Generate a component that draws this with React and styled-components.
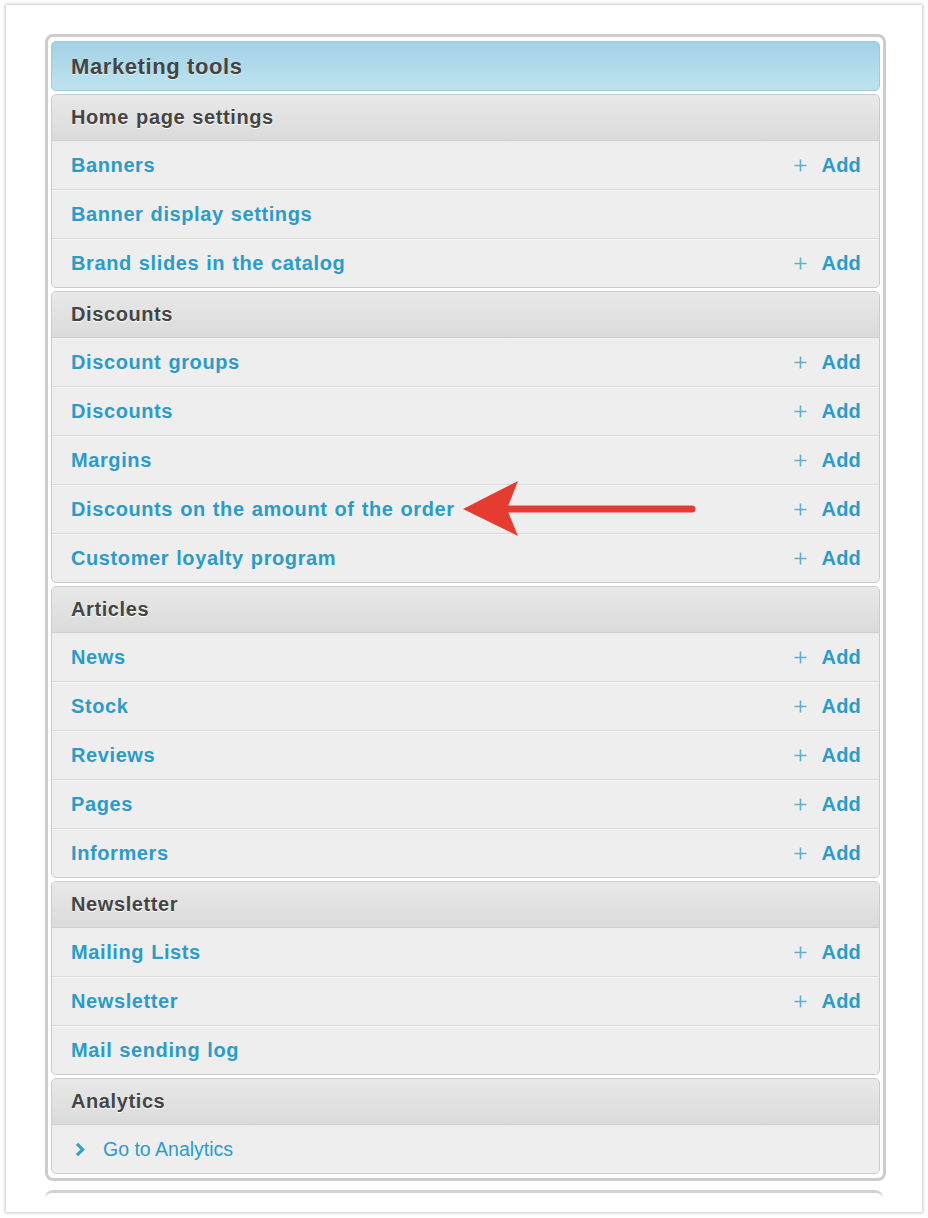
import React from "react";
import styled, { createGlobalStyle } from "styled-components";

const GlobalStyle = createGlobalStyle`
  html, body {
    margin: 0;
    padding: 0;
    background: #fff;
  }
  body {
    font-family: "Liberation Sans", Arial, Helvetica, sans-serif;
  }
`;

const LINK = "#2c9cc7";

const sections = [
  {
    title: "Home page settings",
    items: [
      { label: "Banners", add: true },
      { label: "Banner display settings" },
      { label: "Brand slides in the catalog", add: true },
    ],
  },
  {
    title: "Discounts",
    items: [
      { label: "Discount groups", add: true },
      { label: "Discounts", add: true },
      { label: "Margins", add: true },
      { label: "Discounts on the amount of the order", add: true, arrow: true },
      { label: "Customer loyalty program", add: true },
    ],
  },
  {
    title: "Articles",
    items: [
      { label: "News", add: true },
      { label: "Stock", add: true },
      { label: "Reviews", add: true },
      { label: "Pages", add: true },
      { label: "Informers", add: true },
    ],
  },
  {
    title: "Newsletter",
    items: [
      { label: "Mailing Lists", add: true },
      { label: "Newsletter", add: true },
      { label: "Mail sending log" },
    ],
  },
];

const Frame = styled.div`
  position: relative;
  box-sizing: border-box;
  width: 916px;
  height: 1207px;
  margin: 5px 6px;
  padding: 29px 36px 0 39px;
  background: #fff;
  box-shadow: 0 0 3px 1px rgba(0, 0, 0, 0.22);
  overflow: hidden;
`;

const Box = styled.div`
  display: flex;
  flex-direction: column;
  gap: 3px;
  padding: 4px 3px 4px;
  border: 3px solid #cdcdcd;
  border-radius: 8px;
`;

const NextBox = styled.div`
  height: 30px;
  margin-top: 9px;
  margin-right: 3px;
  border-top: 3px solid #d2d2d2;
  border-radius: 8px 8px 0 0;
`;

const Title = styled.div`
  display: flex;
  align-items: center;
  box-sizing: border-box;
  height: 50px;
  padding: 2px 0 0 19px;
  border: 1px solid #9ccbdd;
  border-radius: 5px;
  background: linear-gradient(#a3d2e5, #bee3ef);
  color: #444;
  font-size: 22px;
  font-weight: 700;
  letter-spacing: 0.6px;
  text-shadow: 0 1px 0 rgba(255, 255, 255, 0.6);
`;

const Group = styled.div`
  border: 1px solid #cbcbcb;
  border-radius: 5px;
  background: #eeeeee;
`;

const GroupHeader = styled.div`
  display: flex;
  align-items: center;
  height: 45px;
  padding-left: 19px;
  border-bottom: 1px solid #cfcfcf;
  border-radius: 5px 5px 0 0;
  background: linear-gradient(#e8e8e8, #dbdbdb);
  color: #444;
  font-size: 20px;
  font-weight: 700;
  letter-spacing: 0.6px;
  word-spacing: 1px;
  text-shadow: 0 1px 0 #fff;
`;

const Row = styled.div`
  position: relative;
  display: flex;
  align-items: center;
  justify-content: space-between;
  height: 48px;
  padding: 0 18px 0 19px;
  border-top: ${(p) => (p.$first ? "none" : "1px solid #d9d9d9")};
  box-shadow: ${(p) => (p.$first ? "none" : "inset 0 1px 0 #f8f8f8")};
`;

const Link = styled.span`
  color: ${LINK};
  font-size: 20px;
  font-weight: 700;
  letter-spacing: 0.6px;
  word-spacing: 0.9px;
`;

const AddLink = styled.span`
  display: flex;
  align-items: center;
  gap: 15px;
  color: ${LINK};
  font-size: 20px;
  font-weight: 700;
  letter-spacing: 0.2px;
`;

const PlainLink = styled.span`
  display: flex;
  align-items: center;
  gap: 18px;
  padding-left: 4px;
  color: ${LINK};
  font-size: 19.5px;
  font-weight: 400;
`;

const Arrow = styled.svg`
  position: absolute;
  left: 409px;
  top: -6px;
  z-index: 2;
  pointer-events: none;
`;

function PlusIcon() {
  return (
    <svg width="13" height="13" viewBox="0 0 13 13">
      <path d="M6.5 0.5v12M0.5 6.5h12" stroke="#5fb0cf" strokeWidth="1.6" />
    </svg>
  );
}

function Chevron() {
  return (
    <svg width="10" height="15" viewBox="0 0 10 15">
      <polyline
        points="2,1.8 7.6,7.5 2,13.2"
        fill="none"
        stroke="#3a9fc8"
        strokeWidth="3.2"
      />
    </svg>
  );
}

function RedArrow() {
  return (
    <Arrow width="240" height="60" viewBox="0 0 240 60">
      <line
        x1="46"
        y1="30"
        x2="231"
        y2="30"
        stroke="#e53b30"
        strokeWidth="7"
        strokeLinecap="round"
      />
      <polygon points="2,30 57,2 46,30 57,57" fill="#e53b30" />
    </Arrow>
  );
}

function Section({ title, items }) {
  return (
    <Group>
      <GroupHeader>{title}</GroupHeader>
      {items.map((item, i) => (
        <Row key={item.label} $first={i === 0}>
          <Link>{item.label}</Link>
          {item.add && (
            <AddLink>
              <PlusIcon />
              Add
            </AddLink>
          )}
          {item.arrow && <RedArrow />}
        </Row>
      ))}
    </Group>
  );
}

export default function App() {
  return (
    <>
      <GlobalStyle />
      <Frame>
        <Box>
          <Title>Marketing tools</Title>
          {sections.map((s) => (
            <Section key={s.title} title={s.title} items={s.items} />
          ))}
          <Group>
            <GroupHeader>Analytics</GroupHeader>
            <Row $first>
              <PlainLink>
                <Chevron />
                Go to Analytics
              </PlainLink>
            </Row>
          </Group>
        </Box>
        <NextBox />
      </Frame>
    </>
  );
}
